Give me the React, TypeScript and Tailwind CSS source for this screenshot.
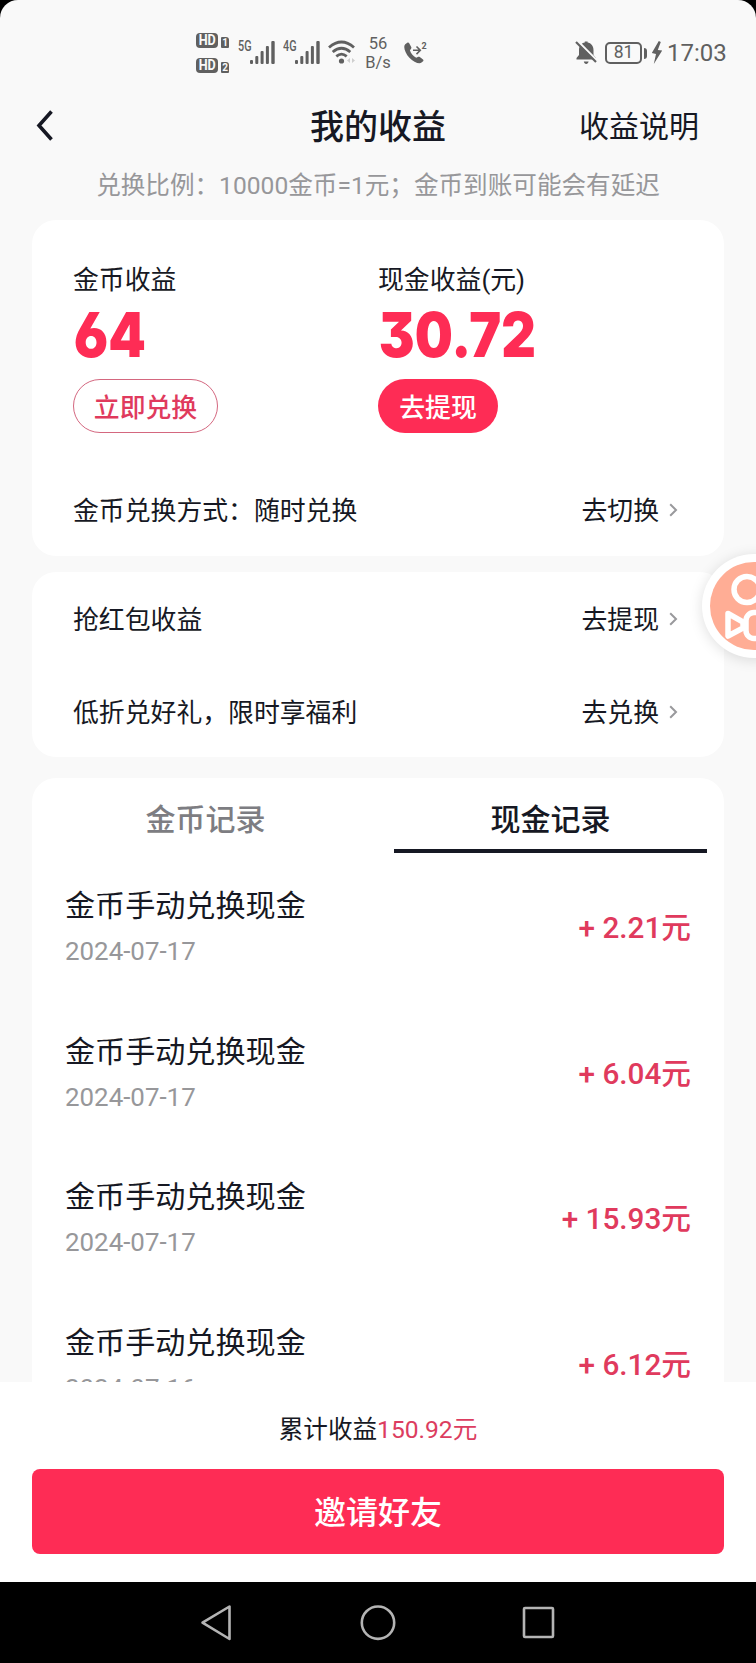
import type { ReactNode } from "react";

const records = [
  { title: "金币手动兑换现金", date: "2024-07-17", amount: "2.21" },
  { title: "金币手动兑换现金", date: "2024-07-17", amount: "6.04" },
  { title: "金币手动兑换现金", date: "2024-07-17", amount: "15.93" },
  { title: "金币手动兑换现金", date: "2024-07-16", amount: "6.12" },
];

const HdBadge = ({ sim }: { sim: string }) => (
  <div className="flex h-[15px] items-end gap-[3px]">
    <span className="flex h-[15px] w-[22px] items-center justify-center rounded-[4px] bg-[#606060] leading-none text-[#f9f9f9]">
      <span className="scale-x-[0.84] text-[15px] font-bold">HD</span>
    </span>
    <span className="flex h-[11px] w-2 items-center justify-center rounded-[1px] rounded-tr-[3px] bg-[#606060] text-[10px] font-bold leading-none text-[#f9f9f9]">
      {sim}
    </span>
  </div>
);

const Signal = ({ label }: { label: string }) => (
  <div className="flex h-6 items-start">
    <span className="w-3 origin-left scale-x-[0.72] text-[15px] font-medium leading-[12px]">
      {label}
    </span>
    <svg width="25" height="24" viewBox="0 0 25 24" fill="#606060">
      <rect x="0" y="20" width="3" height="4" rx="1" />
      <rect x="5.3" y="16" width="3" height="8" rx="1" />
      <rect x="10.6" y="11" width="3" height="13" rx="1" />
      <rect x="15.9" y="6" width="3" height="18" rx="1" />
      <rect x="21.3" y="1" width="3.4" height="23" rx="1" />
    </svg>
  </div>
);

const StatusBar = () => (
  <div className="flex h-[90px] items-start pl-[196px] text-[#606060]">
    <div className="mt-[33px] flex flex-col gap-[10px]">
      <HdBadge sim="1" />
      <HdBadge sim="2" />
    </div>
    <div className="ml-[9px] mt-10 flex gap-2">
      <Signal label="5G" />
      <Signal label="4G" />
    </div>
    <svg className="ml-2 mt-10" width="28" height="24" viewBox="0 0 28 24" fill="none">
      <g stroke="#606060" strokeWidth="2.8">
        <path d="M1 7.5Q13.5 -3.5 26 7.5" />
        <path d="M4.7 12Q13.5 4.5 22.3 12" />
        <path d="M8.3 16.3Q13.5 12 18.7 16.3" />
      </g>
      <circle cx="13.5" cy="21" r="2.6" fill="#606060" />
      <path d="M22 18v5l-3-2.5zM24 18v5l3-2.5z" fill="#cfcfcf" />
    </svg>
    <div className="ml-[9px] mt-[34px] w-[26px] text-center text-[16.5px] leading-[19px]">
      <div>56</div>
      <div>B/s</div>
    </div>
    <svg className="ml-3 mt-[41px]" width="25" height="24" viewBox="0 0 25 24">
      <path
        d="M2.2 3.2L4.3 1.8C5 1.3 5.8 1.5 6.2 2.2L8.2 6C8.6 6.7 8.5 7.5 7.9 8L6.9 9.2C7.8 12.4 10 15 13.2 16.8L14.8 16C15.4 15.6 16.2 15.6 16.8 16L20 18.4C20.6 18.9 20.6 19.6 20.1 20.2L18.5 21.6C16.5 23.5 10.5 21.2 6.4 16.7C2.2 12.2 -0.2 5.5 2.2 3.2Z"
        fill="#606060"
      />
      <path d="M10 9.3h7M13.5 5.5l3.8 3.8-3.8 3.8" fill="none" stroke="#606060" strokeWidth="1.6" />
      <text x="18.5" y="7.5" fontSize="9" fontWeight="700" fill="#606060">
        2
      </text>
    </svg>
    <svg className="ml-[147px] mt-10" width="23" height="25" viewBox="0 0 23 25">
      <path
        d="M1.5 19.5V18L4 15V10C4 6 6.5 3.2 9.8 2.6V1.5H12.6V2.6C16 3.2 18.5 6 18.5 10V15L21 18V19.5ZM8.8 21.5H13.6C13.3 23 12.4 24 11.2 24C10 24 9.1 23 8.8 21.5Z"
        fill="#606060"
      />
      <path d="M2.6 1L22 20.6" stroke="#f9f9f9" strokeWidth="2.4" />
      <path d="M1 2L21 22" stroke="#606060" strokeWidth="2.2" />
    </svg>
    <div className="ml-[7px] mt-[42px] flex items-center">
      <span className="flex h-[22px] w-[37px] items-center justify-center rounded-[5px] border-2 border-[#606060] text-[17.5px] leading-none">
        81
      </span>
      <span className="ml-0.5 h-[11px] w-[3px] rounded-r-sm bg-[#606060]" />
    </div>
    <svg className="ml-1 mt-[41px]" width="12" height="24" viewBox="0 0 12 24">
      <path d="M7.8 0L0.8 12L5 13L2.8 23L11.2 9.6L6.8 9L9.8 1Z" fill="#606060" />
    </svg>
    <div className="ml-1 mt-[39px] text-[24px] leading-7">17:03</div>
  </div>
);

const Chevron = () => (
  <svg className="mb-[3px] ml-[10px]" width="9" height="14" viewBox="0 0 9 14" fill="none">
    <path d="M1.2 1.3L7 7L1.2 12.7" stroke="#99999c" strokeWidth="2" />
  </svg>
);

const LinkRow = ({ label, action }: { label: ReactNode; action: string }) => (
  <div className="flex h-8 items-center justify-between">
    <span>{label}</span>
    <button className="flex items-center">
      {action}
      <Chevron />
    </button>
  </div>
);

const BigNumber = ({ children }: { children: ReactNode }) => (
  <div className="mt-[3px] h-[64px] origin-left scale-x-[0.865] whitespace-nowrap pl-px font-[Inter] text-[62px] font-black leading-[65px] text-[#fe2c55] [font-feature-settings:'cv03','cv09']">
    {children}
  </div>
);

const FloatingBadge = () => (
  <div className="absolute left-[702px] top-[554px] h-[104px] w-[104px] rounded-full bg-white p-2 shadow-[0_2px_14px_rgba(0,0,0,0.13)]">
    <div className="h-[88px] w-[88px] rounded-full bg-[#ffad95]">
      <svg width="88" height="88" viewBox="0 0 88 88" fill="none" stroke="#fff" strokeWidth="5.5" strokeLinejoin="round">
        <circle cx="37" cy="27.5" r="13" />
        <circle cx="64" cy="28" r="9" />
        <rect x="36" y="50.5" width="36" height="26" rx="8" />
        <path d="M18 51.5L33 60V66L18 74Z" />
      </svg>
    </div>
  </div>
);

const App = () => {
  return (
    <div className="w-[756px] bg-black">
      <div className="relative flex h-[1663px] w-[756px] flex-col overflow-hidden rounded-t-[18px] bg-[#f9f9f9] font-[Roboto,'Noto_Sans_CJK_SC',sans-serif] text-[#161823]">
        <StatusBar />

        <header className="grid h-[72px] grid-cols-3 items-center">
          <button className="pl-9">
            <svg width="18" height="32" viewBox="0 0 18 32" fill="none">
              <path d="M15.5 1.5L3 15.5L15.5 29.5" stroke="#161823" strokeWidth="3.6" />
            </svg>
          </button>
          <h1 className="pt-0.5 text-center text-[34px] font-medium">我的收益</h1>
          <span className="pr-[57px] text-right text-[30px]">收益说明</span>
        </header>
        <p className="h-[58px] pt-[3px] text-center text-[24.6px] leading-[42px] text-[#97979a]">
          兑换比例：10000金币=1元；金币到账可能会有延迟
        </p>

        <section className="mx-8 h-[336px] rounded-[24px] bg-white pl-[41px] pr-[46px] pt-[41px] text-[25.85px]">
          <div className="flex">
            <div className="w-[305px]">
              <div className="leading-[38px]">金币收益</div>
              <BigNumber>64</BigNumber>
              <button className="mt-[13px] flex h-[54px] w-[145px] items-center justify-center rounded-full border border-[#d4677f] pt-1 font-medium text-[#e03a5d]">
                立即兑换
              </button>
            </div>
            <div>
              <div className="leading-[38px]">现金收益(元)</div>
              <BigNumber>30.72</BigNumber>
              <button className="mt-[13px] flex h-[54px] w-[120px] items-center justify-center rounded-full bg-[#fe2c55] pt-1 font-medium text-white">
                去提现
              </button>
            </div>
          </div>
          <div className="mt-[62px]">
            <LinkRow label="金币兑换方式：随时兑换" action="去切换" />
          </div>
        </section>

        <section className="mx-8 mt-4 flex h-[185px] flex-col gap-[61px] rounded-[24px] bg-white pl-[41px] pr-[46px] pt-8 text-[25.85px]">
          <LinkRow label="抢红包收益" action="去提现" />
          <LinkRow label="低折兑好礼，限时享福利" action="去兑换" />
        </section>

        <section className="mx-8 mt-[21px] h-[604px] overflow-hidden rounded-t-[24px] bg-white">
          <div className="flex h-[75px] gap-8 px-[17px] text-[30px] font-medium">
            <button className="flex-1 pt-[7px] text-[#7d7d82]">金币记录</button>
            <button className="w-[313px] border-b-4 border-[#161823] pt-[11px]">现金记录</button>
          </div>
          <ul>
            {records.map((record, i) => (
              <li key={i} className="flex h-[145.6px] items-start justify-between pl-[33px] pr-[33px] pt-[31px]">
                <div>
                  <div className="text-[30.1px] leading-[44px]">{record.title}</div>
                  <div className="mt-1 text-[25.9px] leading-[38px] text-[#97979a]">{record.date}</div>
                </div>
                <div className="mt-[22px] text-[29.7px] font-medium leading-[44px] text-[#e03a5d]">
                  + {record.amount}元
                </div>
              </li>
            ))}
          </ul>
        </section>

        <footer className="h-[200px] shrink-0 bg-white px-8 pt-[29px]">
          <div className="text-center text-[24.6px] leading-[38px]">
            累计收益<span className="text-[#dc3d60]">150.92元</span>
          </div>
          <button className="mt-5 h-[85px] w-full rounded-lg bg-[#fe2c55] pt-[3px] text-[32px] font-medium text-white">
            邀请好友
          </button>
        </footer>

        <nav className="h-[81px] shrink-0 bg-black">
          <svg width="756" height="81" viewBox="0 0 756 81" fill="none" stroke="#b4b4b4" strokeWidth="2.6" strokeLinejoin="round">
            <path d="M229.5 24.5V57L202.5 40.7Z" />
            <circle cx="378" cy="40.7" r="16.2" />
            <rect x="524" y="26" width="29" height="29" rx="1" />
          </svg>
        </nav>

        <FloatingBadge />
      </div>
    </div>
  );
};

export default App;
